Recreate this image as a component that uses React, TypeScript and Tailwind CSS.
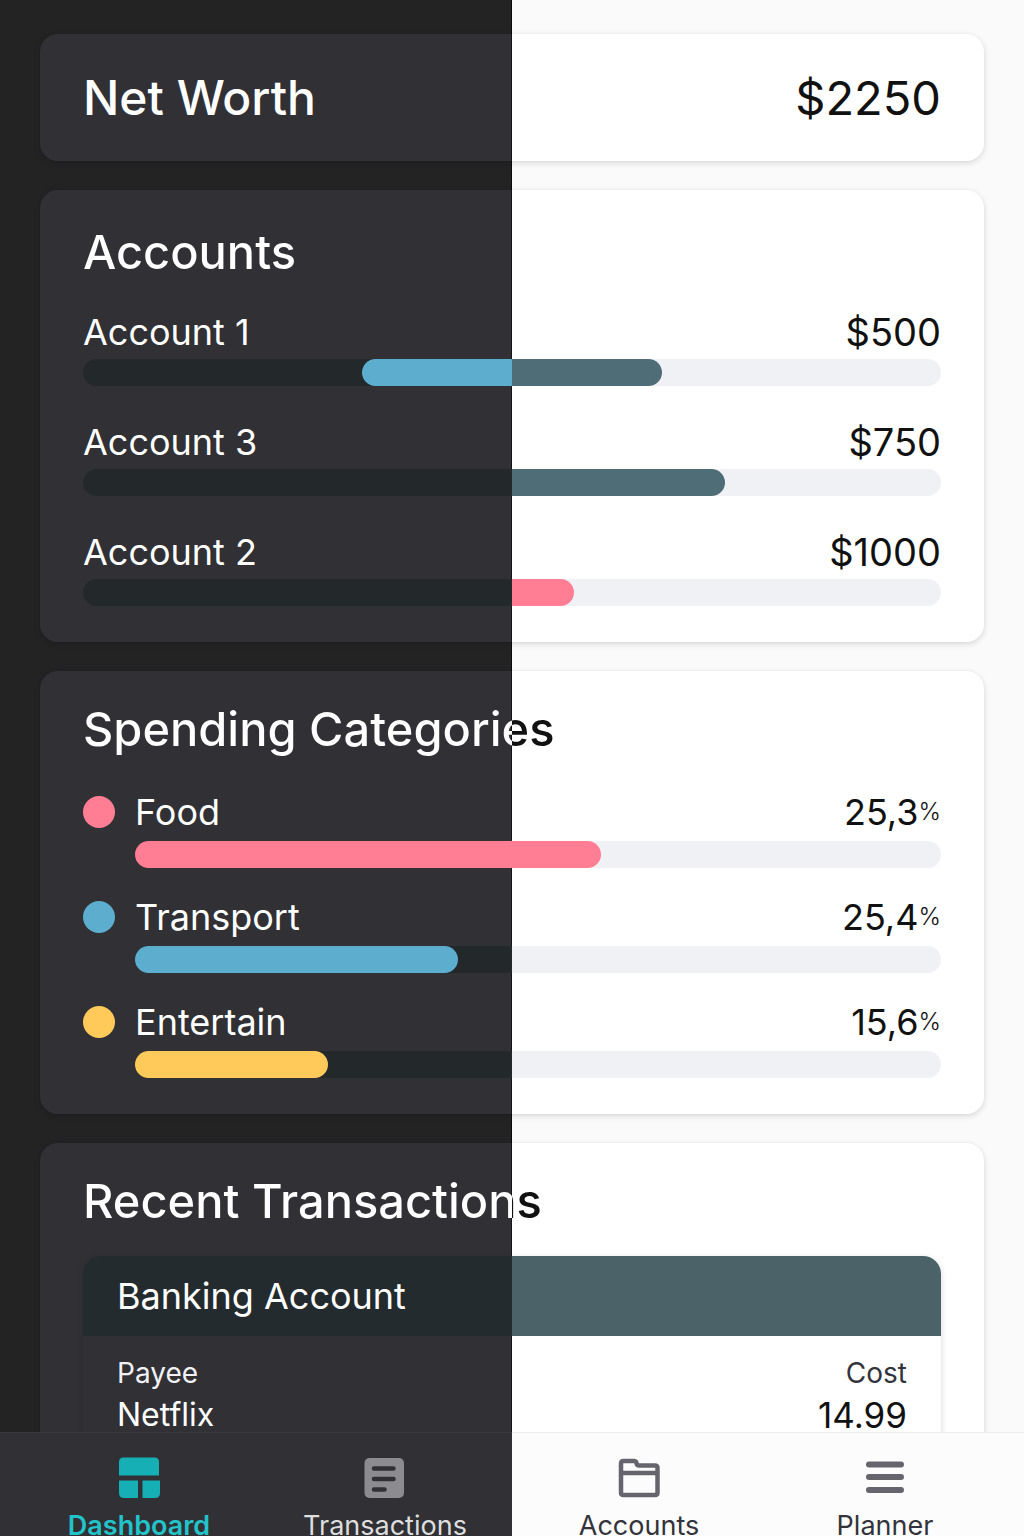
import type { ReactNode } from "react";

const accounts = [
  { name: "Account 1", amount: "$500", start: 32.5, width: 35, fill: "bg-[linear-gradient(to_right,#5cadce_50%,#4f6d77_50%)] rounded-full" },
  { name: "Account 3", amount: "$750", start: 50, width: 24.8, fill: "bg-[#4f6d77] rounded-r-full" },
  { name: "Account 2", amount: "$1000", start: 50, width: 7.2, fill: "bg-[#ff7e94] rounded-r-full" },
];

const categories = [
  { name: "Food", percent: "25,3", width: 57.8, color: "bg-[#ff7e94]" },
  { name: "Transport", percent: "25,4", width: 40.1, color: "bg-[#5cadce]" },
  { name: "Entertain", percent: "15,6", width: 23.9, color: "bg-[#ffca5a]" },
];

function Card({ children, className }: { children: ReactNode; className: string }) {
  return (
    <section
      className={`rounded-[18px] bg-[linear-gradient(to_right,#303035_calc(50%-1px),#151518_calc(50%-1px),#151518_50%,#ffffff_50%)] px-[43px] shadow-[0_2px_6px_rgba(0,0,0,0.14),0_0_2px_rgba(0,0,0,0.06)] ${className}`}
    >
      {children}
    </section>
  );
}

function Heading({ children }: { children: ReactNode }) {
  return (
    <h2 className="bg-[linear-gradient(to_right,#ffffff_50%,#111111_50%)] bg-clip-text text-[47px] leading-[60px] font-medium text-transparent">
      {children}
    </h2>
  );
}

function NavItem({ label, active, className, children }: { label: string; active?: boolean; className: string; children: ReactNode }) {
  return (
    <a
      href="#"
      aria-current={active ? "page" : undefined}
      className={`flex flex-col items-center gap-[11px] pt-6 text-[27px] leading-8 ${className}`}
    >
      <svg viewBox="0 0 42 42" className="size-[42px]" fill="none" aria-hidden="true">
        {children}
      </svg>
      {label}
    </a>
  );
}

export default function App() {
  return (
    <div className="flex h-screen flex-col overflow-hidden bg-[linear-gradient(to_right,#232323_calc(50%-1px),#0a0a0a_calc(50%-1px),#0a0a0a_50%,#fafafa_50%)] font-['Inter',sans-serif] text-[#111111]">
      <main className="flex min-h-0 flex-1 flex-col gap-[29px] overflow-y-auto px-10 pt-[34px] [scrollbar-width:none] *:shrink-0">
        <Card className="flex items-center justify-between pt-[34px] pb-[33px]">
          <h1 className="text-[48px] leading-[60px] font-medium text-white">Net Worth</h1>
          <p className="text-[47px] leading-[60px]">$2250</p>
        </Card>

        <Card className="pt-8 pb-9">
          <Heading>Accounts</Heading>
          <ul className="mt-7 flex flex-col gap-[34px]">
            {accounts.map((a) => (
              <li key={a.name}>
                <div className="flex justify-between text-[36px] leading-[44px]">
                  <span className="text-white">{a.name}</span>
                  <span className="text-[38px]">{a.amount}</span>
                </div>
                <div className="mt-[5px] h-[27px] overflow-hidden rounded-full bg-[linear-gradient(to_right,#23282b_50%,#eff1f5_50%)]">
                  <div className={`h-full ${a.fill}`} style={{ marginLeft: `${a.start}%`, width: `${a.width}%` }} />
                </div>
              </li>
            ))}
          </ul>
        </Card>

        <Card className="pt-7 pb-9">
          <Heading>Spending Categories</Heading>
          <ul className="mt-[31px] flex flex-col gap-[27px]">
            {categories.map((c) => (
              <li key={c.name}>
                <div className="flex items-center text-[36px] leading-[44px]">
                  <span className={`mr-5 size-8 rounded-full ${c.color}`} />
                  <span className="text-white">{c.name}</span>
                  <span className="ml-auto flex items-center">
                    {c.percent}
                    <span className="text-[24px] font-light">%</span>
                  </span>
                </div>
                <div className="mt-[7px] ml-[52px] h-[27px] rounded-full bg-[linear-gradient(to_right,#23282b_calc(50%-26px),#eff1f5_calc(50%-26px))]">
                  <div className={`h-full rounded-full ${c.color}`} style={{ width: `${c.width}%` }} />
                </div>
              </li>
            ))}
          </ul>
        </Card>

        <Card className="pt-7 pb-9">
          <Heading>Recent Transactions</Heading>
          <div className="mt-[25px] overflow-hidden rounded-[18px] pb-6 shadow-[0_2px_6px_rgba(0,0,0,0.16)]">
            <h3 className="bg-[linear-gradient(to_right,#242b2e_50%,#4a6268_50%)] px-[34px] py-[18px] text-[36px] leading-[44px] text-white">
              Banking Account
            </h3>
            <div className="px-[34px] pt-[17px]">
              <table className="w-full">
                <thead className="text-[28px] leading-10">
                  <tr>
                    <th className="text-left font-normal text-[#f1f1f3]">Payee</th>
                    <th className="text-right font-normal text-[#33343b]">Cost</th>
                  </tr>
                </thead>
                <tbody className="leading-[44px]">
                  <tr>
                    <td className="text-[32px] text-white">Netflix</td>
                    <td className="text-right text-[35px]">14.99</td>
                  </tr>
                </tbody>
              </table>
            </div>
          </div>
        </Card>
      </main>

      <nav className="grid h-[104px] shrink-0 grid-cols-2 overflow-hidden">
        <div className="grid grid-cols-2 border-t border-[#3a3a3f] bg-[#303035] pr-1 pl-4">
          <NavItem label="Dashboard" active className="font-semibold text-[#22c3c9]">
            <g fill="#15afb5">
              <path d="M5.500 0.500H36.500Q41 0.500 41 5V18.500H1V5Q1 0.500 5.500 0.500Z" />
              <path d="M1 23.500H20V41H6Q1 41 1 36Z" />
              <path d="M24.500 23.500H42V36Q42 41 37 41H24.500Z" />
            </g>
          </NavItem>
          <NavItem label="Transactions" className="text-[#dededf]">
            <rect x="0.500" y="1" width="39.500" height="40" rx="5" fill="#8c8c90" />
            <path d="M10 11.500H29.500M10 22H29.500M10 32.500H20.500" stroke="#303035" strokeWidth="4.500" strokeLinecap="round" />
          </NavItem>
        </div>
        <div className="grid grid-cols-2 border-t border-[#ececec] bg-[#fcfcfc] pr-4 pl-1">
          <NavItem label="Accounts" className="text-[#33343b]">
            <g stroke="#66656d" strokeWidth="4.500" strokeLinejoin="round">
              <path d="M3 6.500Q3 4 5.500 4H16Q18 4 18.500 6Q19 8.500 21 8.500H37Q39.500 8.500 39.500 11V35.500Q39.500 38 37 38H5.500Q3 38 3 35.500Z" />
              <path d="M3 16H39.500" />
            </g>
          </NavItem>
          <NavItem label="Planner" className="text-[#33343b]">
            <path d="M5 7.500H37M5 20H37M5 33H37" stroke="#66656d" strokeWidth="6" strokeLinecap="round" />
          </NavItem>
        </div>
      </nav>
    </div>
  );
}
